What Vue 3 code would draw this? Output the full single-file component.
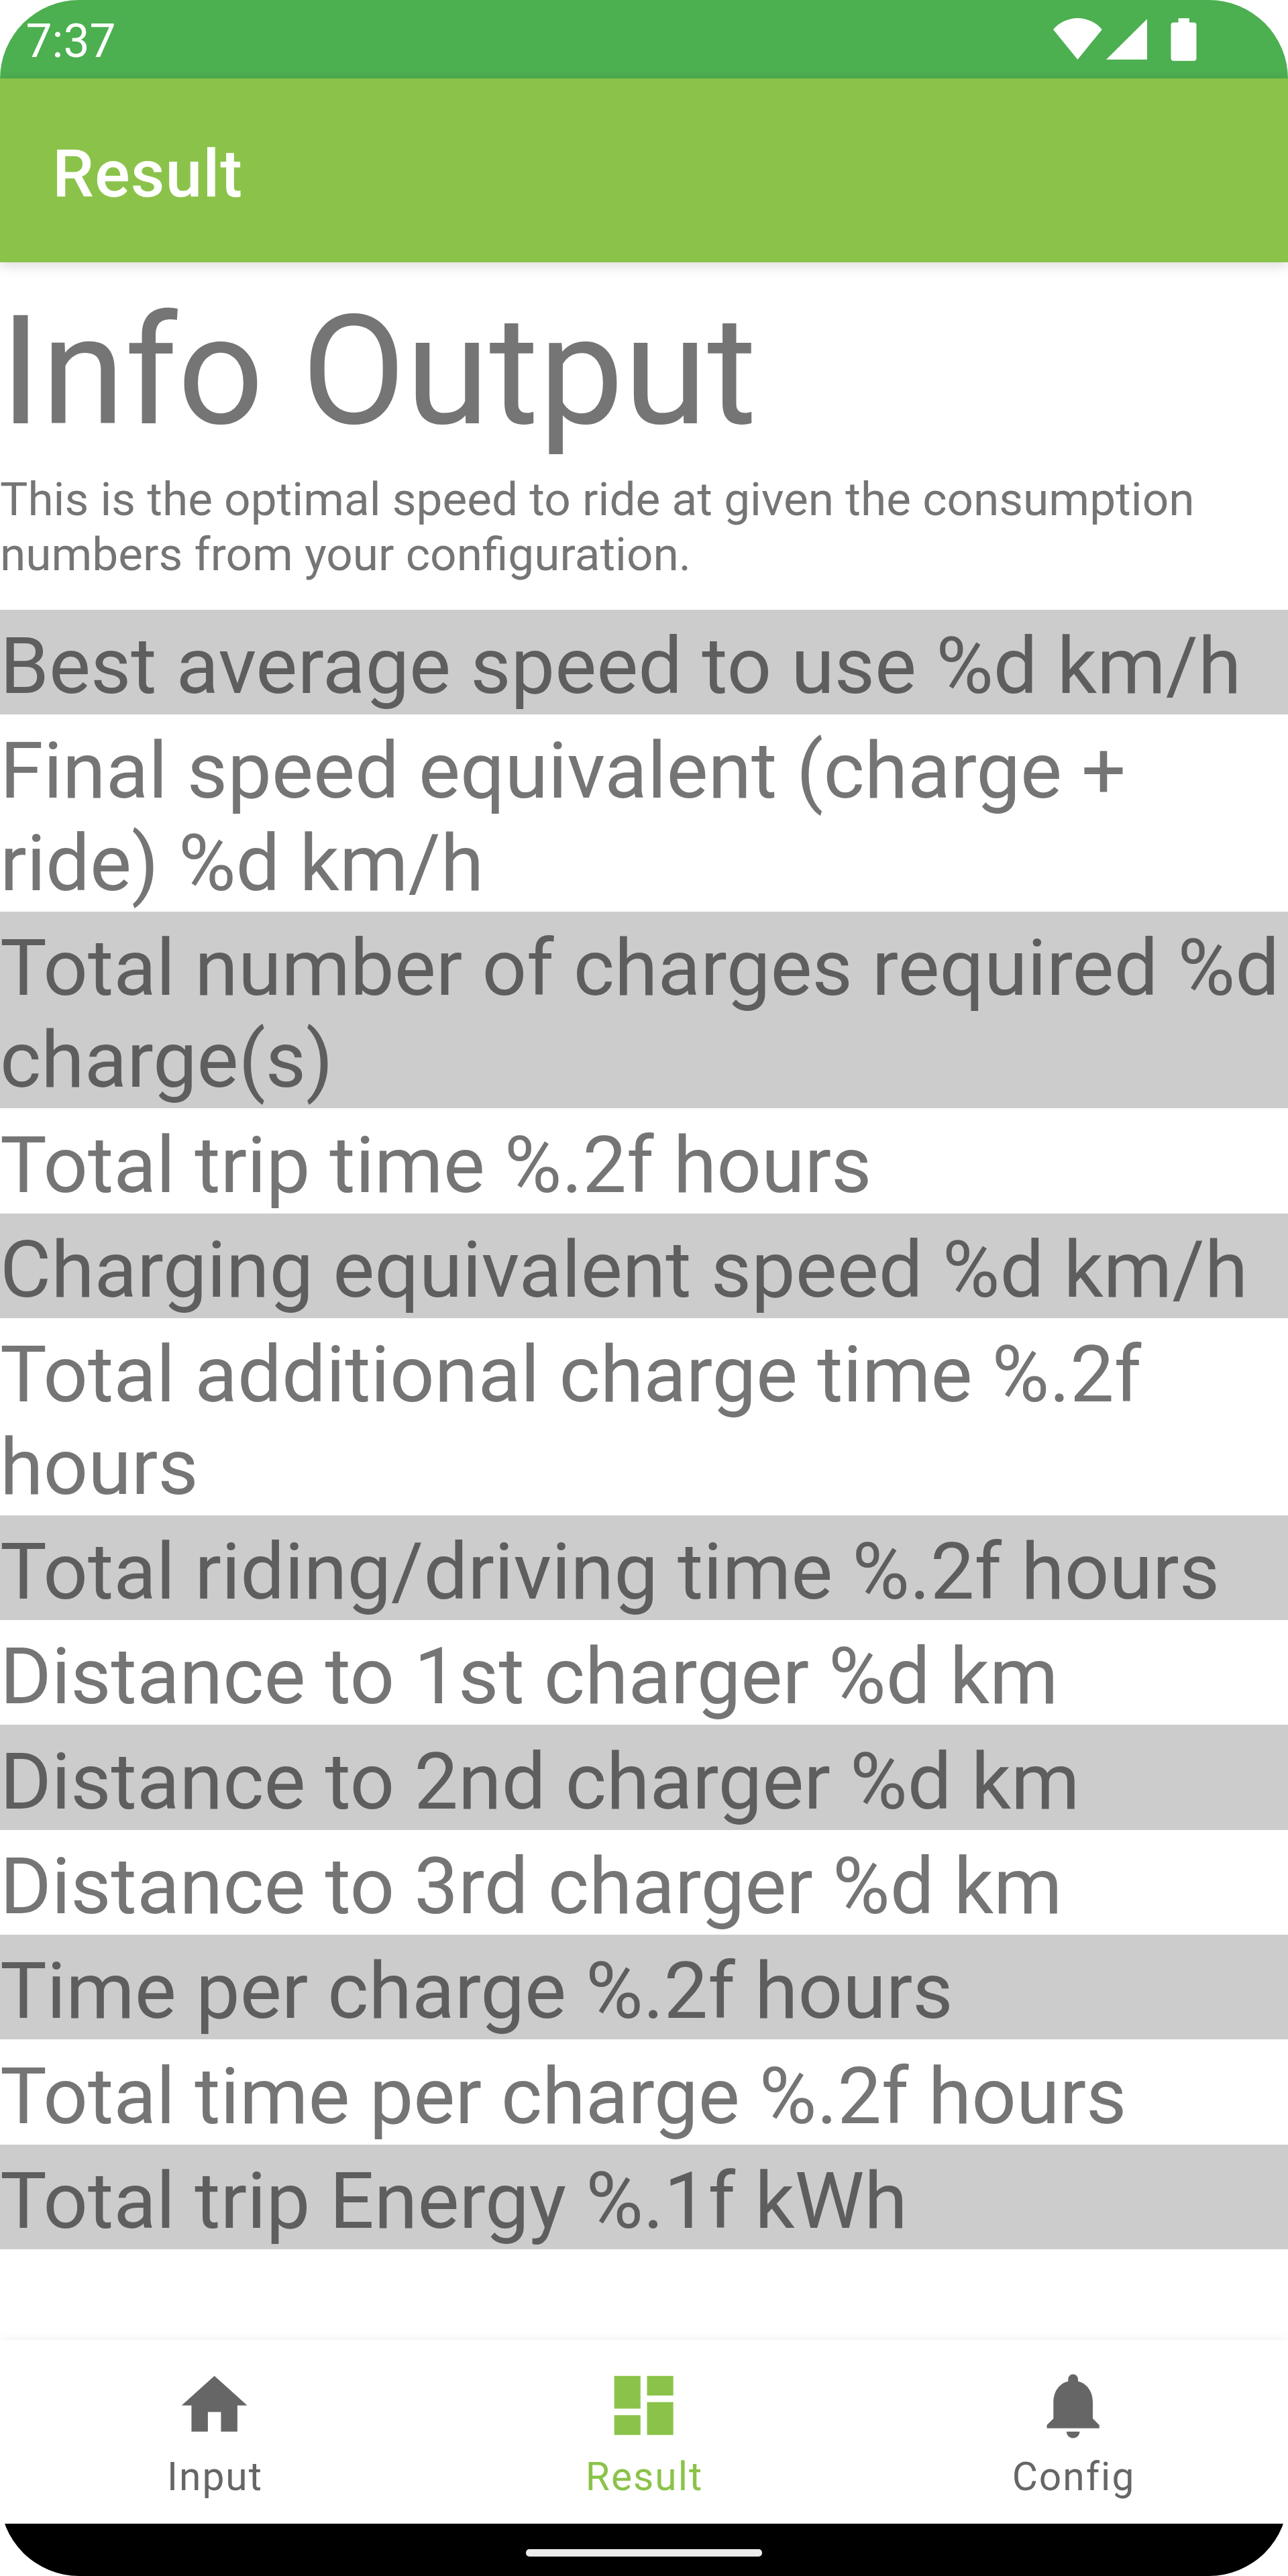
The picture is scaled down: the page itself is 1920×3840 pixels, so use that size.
<script setup>
const rows = [
  ['Best average speed to use %d km/h'],
  ['Final speed equivalent (charge +', 'ride) %d km/h'],
  ['Total number of charges required %d', 'charge(s)'],
  ['Total trip time %.2f hours'],
  ['Charging equivalent speed %d km/h'],
  ['Total additional charge time %.2f', 'hours'],
  ['Total riding/driving time %.2f hours'],
  ['Distance to 1st charger %d km'],
  ['Distance to 2nd charger %d km'],
  ['Distance to 3rd charger %d km'],
  ['Time per charge %.2f hours'],
  ['Total time per charge %.2f hours'],
  ['Total trip Energy %.1f kWh'],
]
const tabs = [
  { label: 'Input', d: 'M10 20v-6h4v6h5v-8h3L12 3 2 12h3v8z' },
  { label: 'Result', active: true, d: 'M3 13h8V3H3v10zm0 8h8v-6H3v6zm10 0h8V11h-8v10zm0-18v6h8V3h-8z' },
  { label: 'Config', d: 'M12 22c1.1 0 2-.9 2-2h-4c0 1.1.89 2 2 2zm6-6v-5c0-3.07-1.64-5.64-4.5-6.32V4c0-.83-.67-1.5-1.5-1.5s-1.5.67-1.5 1.5v.68C7.63 5.36 6 7.92 6 11v5l-2 2v1h16v-1l-2-2z' },
]
</script>

<template>
  <div class="screen">
    <header class="status">
      <span class="clock">7:37</span>
      <svg class="signals" viewBox="0 0 220 64" fill="#fff">
        <path d="M0 17A47.5 47.5 0 0 1 72.8 17L36.4 61.8Z" />
        <path d="M79 61.8L140 1.2V61.8Z" />
        <rect x="175.5" y="6.6" width="38" height="57.2" rx="4" />
        <rect x="186.5" y="0.2" width="16.5" height="9" />
      </svg>
    </header>
    <div class="appbar">Result</div>
    <main>
      <h1>Info Output</h1>
      <p class="intro">This is the optimal speed to ride at given the consumption<br>numbers from your configuration.</p>
      <div v-for="(row, i) in rows" :key="i" class="row" :class="{ shaded: i % 2 === 0 }">
        <div v-for="line in row" :key="line" class="line">{{ line }}</div>
      </div>
    </main>
    <nav>
      <div v-for="t in tabs" :key="t.label" class="tab" :class="{ active: t.active }">
        <svg viewBox="0 0 24 24"><path :d="t.d" fill="currentColor" /></svg>
        <span>{{ t.label }}</span>
      </div>
    </nav>
    <footer><div class="handle"></div></footer>
  </div>
</template>

<style>
body { background: #fff; }
</style>
<style scoped>
.screen { width: 1920px; height: 3840px; overflow: hidden; border-radius: 118px; background: #fff; display: flex; flex-direction: column; font-family: Roboto, sans-serif; color: #757575; }
.status { height: 117px; flex: none; background: #4caf50; color: #fff; display: flex; justify-content: space-between; align-items: center; }
.clock { font-size: 69.5px; margin-left: 38.5px; padding-top: 5px; }
.signals { width: 220px; height: 64px; margin-right: 130px; }
.appbar { height: 274px; flex: none; background: #8bc34a; color: #fff; font-size: 98.5px; font-weight: 500; letter-spacing: 1px; line-height: 286px; padding-left: 78px; box-shadow: 0 5px 18px rgba(0, 0, 0, .15); }
main { flex: 1; }
h1 { margin: 31.5px 0 0; font-size: 225.8px; font-weight: 400; line-height: 263px; }
.intro { margin: 18px 0 41.2px; font-size: 69.35px; line-height: 82px; white-space: nowrap; }
.row { padding: 16.4px 0 2.65px; font-size: 117px; white-space: nowrap; }
.line { line-height: 137.3px; }
.shaded { background: #ccc; color: #5e5e5e; }
nav { height: 274px; flex: none; display: flex; box-shadow: 0 0 14px rgba(0, 0, 0, .065); }
.tab { flex: 1; display: flex; flex-direction: column; align-items: center; color: #666; font-size: 58.7px; letter-spacing: 2px; }
.tab svg { width: 117.3px; height: 117.3px; margin-top: 39px; }
.tab span { line-height: 70px; margin-top: 12.3px; padding-left: 1px; }
.tab.active { color: #8bc34a; }
footer { height: 78px; flex: none; background: #000; display: flex; justify-content: center; align-items: center; }
.handle { width: 352px; height: 11px; margin-top: 8px; border-radius: 5px; background: #ebebeb; }
</style>
